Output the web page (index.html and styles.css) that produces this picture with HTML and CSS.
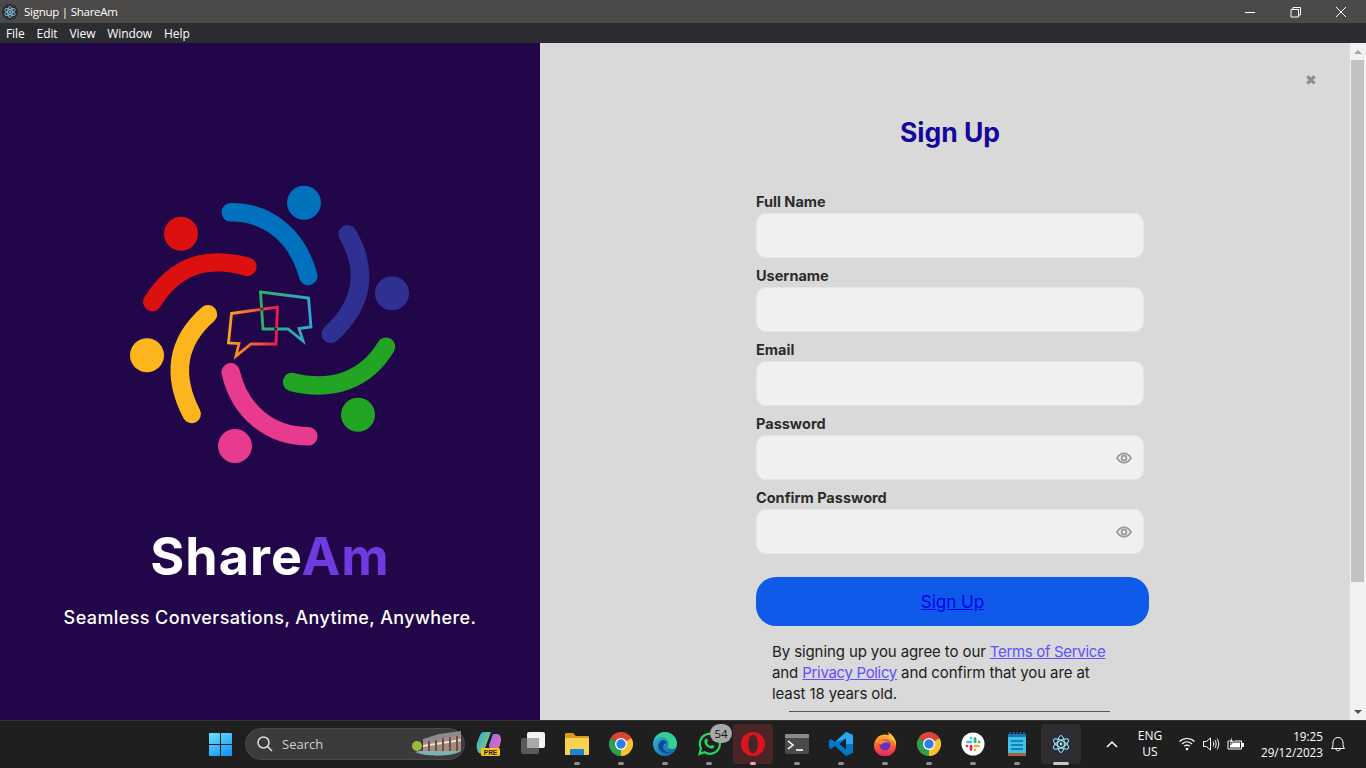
FILE: index.html
```html
<!DOCTYPE html>
<html>
<head>
<title>Signup | ShareAm</title>
<meta charset="UTF-8"/>
<link rel="stylesheet" href="styles.css">
</head>
<body>
	<svg class="defs" width="0" height="0">
		<defs>
			<symbol id="icoChrome" viewBox="0 0 24 24">
				<path fill="#db4437" d="M12 12L1.6 6A12 12 0 0 1 22.4 6Z"/>
				<path fill="#fbc02d" d="M12 12L22.4 6A12 12 0 0 1 12 24Z"/>
				<path fill="#2e9e4f" d="M12 12L12 24A12 12 0 0 1 1.6 6Z"/>
				<circle cx="12" cy="12" r="6" fill="#fff"/>
				<circle cx="12" cy="12" r="4.7" fill="#2f7de9"/>
			</symbol>
			<symbol id="icoElectron" viewBox="0 0 24 24">
				<circle cx="12" cy="12" r="12" fill="#2b2e3a"/>
				<g fill="none" stroke="#9feaf9" stroke-width="1">
					<ellipse cx="12" cy="12" rx="8.5" ry="3.4" transform="rotate(30 12 12)"/>
					<ellipse cx="12" cy="12" rx="8.5" ry="3.4" transform="rotate(90 12 12)"/>
					<ellipse cx="12" cy="12" rx="8.5" ry="3.4" transform="rotate(150 12 12)"/>
				</g>
				<circle cx="12" cy="12" r="1.4" fill="#9feaf9"/>
			</symbol>
			<symbol id="icoEye" viewBox="0 0 16 16">
				<path fill="none" stroke="#989898" stroke-width="1.7" d="M1 8C3 4.8 5.3 3.4 8 3.4S13 4.8 15 8C13 11.2 10.7 12.6 8 12.6S3 11.2 1 8Z"/>
				<circle cx="8" cy="8" r="2.4" fill="none" stroke="#989898" stroke-width="1.7"/>
			</symbol>
			<linearGradient id="gradOrange" x1="0" y1="0" x2="1" y2="0">
				<stop offset="0" stop-color="#f9a51f"/>
				<stop offset="1" stop-color="#ed1c4a"/>
			</linearGradient>
			<linearGradient id="gradTeal" x1="0" y1="0" x2="1" y2="0">
				<stop offset="0" stop-color="#2fb05f"/>
				<stop offset="1" stop-color="#2ea9d6"/>
			</linearGradient>
			<linearGradient id="gradWin" x1="0" y1="0" x2="0.6" y2="1">
				<stop offset="0" stop-color="#6fe0fb"/>
				<stop offset="1" stop-color="#1c9bf5"/>
			</linearGradient>
			<linearGradient id="gradPilotA" x1="0" y1="0" x2="1" y2="1">
				<stop offset="0" stop-color="#2aa7ee"/>
				<stop offset="1" stop-color="#9ad14a"/>
			</linearGradient>
			<linearGradient id="gradPilotB" x1="0" y1="0" x2="1" y2="1">
				<stop offset="0" stop-color="#9a6cf0"/>
				<stop offset="1" stop-color="#f06ab0"/>
			</linearGradient>
			<linearGradient id="gradEdge" x1="0" y1="0" x2="1" y2="1">
				<stop offset="0" stop-color="#35c1d8"/>
				<stop offset="1" stop-color="#0c59a4"/>
			</linearGradient>
			<linearGradient id="gradFox" x1="0" y1="0" x2="0" y2="1">
				<stop offset="0" stop-color="#ffb52e"/>
				<stop offset="0.55" stop-color="#ff5a2c"/>
				<stop offset="1" stop-color="#e3206b"/>
			</linearGradient>
		</defs>
	</svg>

	<div class="titlebar">
		<svg class="titlebar-icon" width="16" height="16"><use href="#icoElectron"/></svg>
		<span class="titlebar-text">Signup | ShareAm</span>
		<div class="winbtns">
			<div class="winbtn">
				<svg width="12" height="12" viewBox="0 0 12 12"><path stroke="#fff" d="M1 6.5H11"/></svg>
			</div>
			<div class="winbtn">
				<svg width="12" height="12" viewBox="0 0 12 12"><path fill="none" stroke="#fff" d="M1 3.5H8.5V11H1ZM3 3.5V1.5H10.5V9H8.5"/></svg>
			</div>
			<div class="winbtn">
				<svg width="12" height="12" viewBox="0 0 12 12"><path stroke="#fff" d="M1 1L11 11M11 1L1 11"/></svg>
			</div>
		</div>
	</div>

	<div class="menubar">
		<span>File</span>
		<span>Edit</span>
		<span>View</span>
		<span>Window</span>
		<span>Help</span>
	</div>

	<div class="app">
		<div class="brand">
			<svg class="logo" width="300" height="290" viewBox="0 0 300 290">
				<g fill="none" stroke-width="18.5" stroke-linecap="round">
					<path stroke="#0071bc" d="M110.7 32.3C150 32 178 58 188.3 96"/>
					<path stroke="#2e3192" d="M227.7 54.3C248 90 244 124 210.7 154"/>
					<path stroke="#22a522" d="M266 166.7C246 200 212 212 172 202"/>
					<path stroke="#e83a8f" d="M110.7 192.3C120 232 150 256 188.3 256.3"/>
					<path stroke="#fdb51e" d="M88 134.3C56 162 52 196 71.7 234"/>
					<path stroke="#dd1010" d="M32.3 122C56 84 88 76 127.3 86.7"/>
				</g>
				<circle cx="184" cy="22.7" r="17" fill="#0071bc"/>
				<circle cx="272" cy="113.3" r="17" fill="#2e3192"/>
				<circle cx="238" cy="234.7" r="17" fill="#22a522"/>
				<circle cx="115" cy="266" r="17" fill="#e83a8f"/>
				<circle cx="27" cy="175.3" r="17" fill="#fdb51e"/>
				<circle cx="61" cy="53.7" r="17" fill="#dd1010"/>
				<path fill="none" stroke="url(#gradOrange)" stroke-width="2.8" d="M111.5 133.5L157.5 127L156 164H131L116 176L119 163.5L108.5 163Z"/>
				<path fill="none" stroke="url(#gradTeal)" stroke-width="2.8" d="M140.5 112L188.5 118L191 147L179 148.5L183 161L168 149H143Z"/>
				<rect x="140.4" y="127.7" width="2.8" height="2.8" fill="#4a2f22"/>
				<rect x="154.3" y="147.6" width="2.8" height="2.8" fill="#3a1a22"/>
			</svg>
			<h1 class="brand-name">Share<span class="brand-am">Am</span></h1>
			<p class="brand-tag">Seamless Conversations, Anytime, Anywhere.</p>
		</div>

		<div class="content">
			<div class="close">&#10006;</div>
			<form class="signup">
				<h2 class="signup-title">Sign Up</h2>
				<div class="field">
					<label>Full Name</label>
					<div class="inputbox"></div>
				</div>
				<div class="field">
					<label>Username</label>
					<div class="inputbox"></div>
				</div>
				<div class="field">
					<label>Email</label>
					<div class="inputbox"></div>
				</div>
				<div class="field">
					<label>Password</label>
					<div class="inputbox"><svg width="16" height="16"><use href="#icoEye"/></svg></div>
				</div>
				<div class="field">
					<label>Confirm Password</label>
					<div class="inputbox"><svg width="16" height="16"><use href="#icoEye"/></svg></div>
				</div>
				<div class="submit"><a href="#">Sign Up</a></div>
				<p class="terms">By signing up you agree to our <a href="#">Terms of Service</a><br>and <a href="#">Privacy Policy</a> and confirm that you are at<br>least 18 years old.</p>
				<div class="rule"></div>
			</form>
		</div>

		<div class="scrollbar">
			<div class="scroll-up"></div>
			<div class="scroll-track"><div class="scroll-thumb"></div></div>
			<div class="scroll-down"></div>
		</div>
	</div>

	<div class="taskbar">
		<div class="task-start">
			<svg width="23" height="23" viewBox="0 0 23 23">
				<path fill="url(#gradWin)" d="M0 1a1 1 0 0 1 1-1H11V11H0ZM12 0H22a1 1 0 0 1 1 1V11H12ZM0 12H11V23H1a1 1 0 0 1-1-1ZM12 12H23V22a1 1 0 0 1-1 1H12Z"/>
			</svg>
		</div>
		<div class="task-search">
			<svg width="18" height="18" viewBox="0 0 18 18">
				<circle cx="7.5" cy="7.5" r="5.5" fill="none" stroke="#ddd" stroke-width="1.5"/>
				<path stroke="#ddd" stroke-width="1.6" d="M11.5 11.5L16 16"/>
			</svg>
			<span>Search</span>
			<svg class="search-art" width="52" height="26" viewBox="0 0 52 26">
				<path fill="#7fb0b5" d="M4 21C16 18 38 20 50 20C42 26 14 26 4 21Z"/>
				<circle cx="6" cy="15" r="5" fill="#9bbb3c"/>
				<path fill="#b08878" d="M12 10L50 3V20L12 20Z"/>
				<path fill="#8a8a8e" d="M12 8L28 3L50 0V4L12 11Z"/>
				<path fill="#e4e0dc" d="M12 14L50 8V10L12 16Z"/>
				<path fill="#5c5452" d="M17 10h2v10h-2ZM24 9h2v11h-2ZM31 7h2v13h-2ZM38 6h2v14h-2ZM45 5h2v15h-2Z"/>
			</svg>
		</div>
		<div class="task-item">
			<svg width="26" height="26" viewBox="0 0 26 26">
				<path fill="url(#gradPilotA)" d="M8 1H15L8 20C7 23 5 23 3 22C1 20 0 16 1 12L4 4C5 2 6 1 8 1Z"/>
				<path fill="url(#gradPilotB)" d="M14 20H20C22 19 23 17 24 14L25 9C25 6 24 3 21 3H17L13 14Z"/>
				<rect x="5" y="17" width="19" height="8" rx="1.5" fill="#f5c518"/>
				<text class="pre-text" x="14.5" y="23.5" text-anchor="middle">PRE</text>
			</svg>
		</div>
		<div class="task-item">
			<svg width="24" height="24" viewBox="0 0 24 24">
				<rect x="0" y="6" width="18" height="16" rx="2" fill="#5a5a5a"/>
				<rect x="6" y="0" width="18" height="16" rx="2" fill="#f2f2f2"/>
				<rect x="6" y="6" width="12" height="10" fill="#a9a9a9"/>
			</svg>
		</div>
		<div class="task-item is-open">
			<svg width="24" height="24" viewBox="0 0 24 24">
				<path fill="#d89a1c" d="M0 2a1 1 0 0 1 1-1H8L11 4H23a1 1 0 0 1 1 1V8H0Z"/>
				<path fill="#fbd24e" d="M0 6H24V22a1 1 0 0 1-1 1H1a1 1 0 0 1-1-1Z"/>
				<path fill="#1c84d6" d="M5 18a1 1 0 0 1 1-1H18a1 1 0 0 1 1 1V23H5Z"/>
			</svg>
		</div>
		<div class="task-item is-open">
			<svg width="24" height="24"><use href="#icoChrome"/></svg>
		</div>
		<div class="task-item is-open">
			<svg width="24" height="24" viewBox="0 0 24 24">
				<circle cx="12" cy="12" r="12" fill="url(#gradEdge)"/>
				<path fill="#35d08f" d="M12 0C18 0 24 5 24 12C24 15 22 17 19 17C16 17 14 16 15 14C17 11 14 5 8 5C5 5 2 7 1 9C2 4 7 0 12 0Z"/>
				<path fill="#0a4e8f" d="M10 8C6 9 4 13 6 17C8 21 13 22 17 21C13 20 10 18 10 15C10 12 12 11 14 11C13 9 12 8 10 8Z"/>
			</svg>
		</div>
		<div class="task-item is-open">
			<svg width="24" height="24" viewBox="0 0 24 24">
				<path fill="none" stroke="#25d366" stroke-width="2.2" d="M2.5 22L4 16.5A10 10 0 1 1 7.5 20.3Z"/>
				<path fill="#25d366" d="M8.5 7C10 6 10.5 7 11 9L10 10.5C10.5 12 12 13.5 13.5 14L15 13C17 13.5 18 14 17 15.5C15.5 17.5 12 16.5 9.5 14C7.5 12 6.5 9 8.5 7Z"/>
			</svg>
			<span class="badge">54</span>
		</div>
		<div class="task-item is-active">
			<svg width="24" height="24" viewBox="0 0 24 24">
				<ellipse cx="12" cy="12" rx="12" ry="12" fill="#e0141e"/>
				<ellipse cx="12" cy="12" rx="5" ry="9.5" fill="#4a2528"/>
			</svg>
		</div>
		<div class="task-item is-open">
			<svg width="24" height="20" viewBox="0 0 24 20">
				<rect width="24" height="20" rx="2" fill="#4a4a4a"/>
				<rect width="24" height="4" rx="1" fill="#8c8c8c"/>
				<path fill="none" stroke="#fff" stroke-width="1.6" d="M3 7L8 11L3 15"/>
				<path stroke="#fff" stroke-width="1.6" d="M11 16H18"/>
			</svg>
		</div>
		<div class="task-item is-open">
			<svg width="24" height="24" viewBox="0 0 24 24">
				<path fill="#0078c8" d="M17 0L24 3V21L17 24L6 14L2 17L0 15.5V8.5L2 7L6 10ZM17 6.5L10.5 12L17 17.5Z"/>
				<path fill="#29a6ef" d="M17 0L24 3V12H17V6.5L6 10L2 7L6 10Z"/>
			</svg>
		</div>
		<div class="task-item is-open">
			<svg width="24" height="24" viewBox="0 0 24 24">
				<circle cx="12" cy="13.5" r="11" fill="url(#gradFox)"/>
				<path fill="#ffc83a" d="M15 0C20 3 24 8 23 14C22 10 20 7 15 6C16 4 16 2 15 0Z"/>
				<circle cx="12" cy="13" r="5.5" fill="#6b32b8"/>
				<path fill="#ff8a2c" d="M5 10C8 8 14 7 17 11C14 10 11 10 9 12C7 13 6 12 5 10Z"/>
			</svg>
		</div>
		<div class="task-item is-open">
			<svg width="24" height="24"><use href="#icoChrome"/></svg>
		</div>
		<div class="task-item is-open">
			<svg width="24" height="24" viewBox="0 0 24 24">
				<circle cx="12" cy="12" r="11.5" fill="#fff"/>
				<g stroke-width="2.7" stroke-linecap="round">
					<path stroke="#36c5f0" d="M6.5 10H10M10 6V6.1"/>
					<path stroke="#2eb67d" d="M14 6.5V10M18 10H17.9"/>
					<path stroke="#ecb22e" d="M17.5 14H14M14 18V17.9"/>
					<path stroke="#e01e5a" d="M10 17.5V14M6 14H6.1"/>
				</g>
			</svg>
		</div>
		<div class="task-item is-open">
			<svg width="18" height="24" viewBox="0 0 18 24">
				<rect x="0" y="2" width="18" height="20" fill="#43bfe8"/>
				<rect x="0" y="21" width="18" height="3" fill="#a8623a"/>
				<rect x="0" y="2" width="18" height="3" fill="#1679b5"/>
				<path stroke="#1382b8" stroke-width="2" d="M3 9H15M3 13H15M3 17H15"/>
				<path stroke="#1679b5" stroke-width="1.2" d="M2 0V4M5.5 0V4M9 0V4M12.5 0V4M16 0V4"/>
			</svg>
		</div>
		<div class="task-item is-current">
			<svg width="24" height="24"><use href="#icoElectron"/></svg>
		</div>

		<div class="tray">
			<div class="tray-chevron">
				<svg width="12" height="8" viewBox="0 0 12 8"><path fill="none" stroke="#fff" stroke-width="1.5" d="M1 7L6 2L11 7"/></svg>
			</div>
			<div class="tray-lang">ENG<br>US</div>
			<div class="tray-ico">
				<svg width="16" height="14" viewBox="0 0 16 14">
					<g fill="none" stroke="#fff" stroke-width="1.2">
						<path d="M0.5 4.5C4.5 0.5 11.5 0.5 15.5 4.5"/>
						<path d="M3 7C6 4.2 10 4.2 13 7"/>
						<path d="M5.3 9.3C6.8 8 9.2 8 10.7 9.3"/>
					</g>
					<circle cx="8" cy="12" r="1.3" fill="#fff"/>
				</svg>
			</div>
			<div class="tray-ico">
				<svg width="17" height="14" viewBox="0 0 17 14">
					<g fill="none" stroke="#fff">
						<path d="M0.5 4.5H3.5L7.5 1V13L3.5 9.5H0.5Z"/>
						<path d="M10 4.5C11 6 11 8 10 9.5"/>
						<path d="M12 3C13.5 5 13.5 9 12 11"/>
						<path d="M14 1.5C16.3 4.5 16.3 9.5 14 12.5"/>
					</g>
				</svg>
			</div>
			<div class="tray-ico">
				<svg width="17" height="14" viewBox="0 0 17 14">
					<path fill="none" stroke="#fff" d="M1 4H14.5V12H1Z"/>
					<path fill="#fff" d="M15 6H17V10H15ZM3 5.5H13V10.5H3Z"/>
					<path fill="#fff" stroke="#1f1f1f" stroke-width="0.6" d="M5 0L2 5H4.5L3.5 8L7.5 3.5H5Z"/>
				</svg>
			</div>
			<div class="tray-clock">19:25<br>29/12/2023</div>
			<div class="tray-ico tray-bell">
				<svg width="16" height="16" viewBox="0 0 16 16">
					<path fill="none" stroke="#fff" d="M1.5 12.5C3 11 3 9 3 7C3 3.5 5 1.5 8 1.5S13 3.5 13 7C13 9 13 11 14.5 12.5Z"/>
					<path fill="none" stroke="#fff" d="M6 13C6 15.3 10 15.3 10 13"/>
				</svg>
			</div>
		</div>
	</div>
</body>
</html>
```

FILE: styles.css
```css
html, body
{
	margin: 0;
	padding: 0;
	height: 100%;
	overflow: hidden;
}

body
{
	display: flex;
	flex-direction: column;
	font-family: Inter, "Liberation Sans", sans-serif;
}

.defs
{
	display: block;
	height: 0;
}

/* window chrome */

.titlebar
{
	height: 23px;
	flex: none;
	display: flex;
	align-items: center;
	background-color: #4c4a48;
	color: #fff;
	font-family: "Open Sans", sans-serif;
	font-size: 11.5px;
	letter-spacing: -0.25px;
}

.titlebar-icon
{
	margin: 0 6px 0 2px;
}

.winbtns
{
	margin-left: auto;
	padding-right: 2px;
	display: flex;
}

.winbtn
{
	width: 45.5px;
	display: flex;
	justify-content: center;
}

.menubar
{
	height: 20px;
	flex: none;
	display: flex;
	align-items: center;
	gap: 12px;
	padding-left: 6px;
	background-color: #2b2d30;
	color: #fff;
	font-family: "Open Sans", sans-serif;
	font-size: 12px;
	letter-spacing: -0.1px;
}

.app
{
	flex: 1;
	min-height: 0;
	display: flex;
}

/* left side */

.brand
{
	width: 540px;
	flex: none;
	box-sizing: border-box;
	padding-top: 137px;
	display: flex;
	flex-direction: column;
	align-items: center;
	background-color: #21074a;
}

.logo
{
	display: block;
	flex: none;
}

.brand-name
{
	margin: 57px 0 0 0;
	font-size: 52px;
	line-height: 60px;
	font-weight: 700;
	letter-spacing: 1.1px;
	color: #fff;
}

.brand-am
{
	color: #6f3be0;
}

.brand-tag
{
	margin: 18px 0 0 0;
	font-size: 18px;
	line-height: 26px;
	font-weight: 500;
	letter-spacing: 0.4px;
	color: #fff;
}

/* form side */

.content
{
	flex: 1;
	position: relative;
	background-color: #d9d9d9;
	padding-left: 216px;
}

.close
{
	position: absolute;
	top: 29px;
	right: 33px;
	font-size: 14px;
	line-height: 16px;
	color: #8c8c8c;
}

.signup
{
	width: 393px;
	padding-top: 69px;
}

.signup-title
{
	width: 388px;
	margin: 0 0 40px 0;
	text-align: center;
	font-size: 26.5px;
	line-height: 40px;
	font-weight: 700;
	color: #14089a;
}

.field
{
	margin-bottom: 8px;
}

.field label
{
	display: block;
	height: 20px;
	margin-bottom: 1px;
	font-size: 14.5px;
	line-height: 20px;
	font-weight: 700;
	color: #2b2b2b;
}

.inputbox
{
	width: 388px;
	height: 45px;
	box-sizing: border-box;
	display: flex;
	align-items: center;
	justify-content: flex-end;
	padding-right: 11px;
	background-color: #f0f0f0;
	border: 1px solid #e6e6e6;
	border-radius: 10px;
}

.submit
{
	height: 49px;
	margin-top: 23px;
	display: flex;
	align-items: center;
	justify-content: center;
	background-color: #105ae9;
	border-radius: 20px;
	font-size: 17px;
}

.submit a
{
	color: #0000ee;
}

.terms
{
	margin: 15px 0 0 16px;
	white-space: nowrap;
	font-size: 15px;
	line-height: 21px;
	letter-spacing: -0.1px;
	color: #1c1c1c;
}

.terms a
{
	letter-spacing: -0.33px;
	color: #6050ff;
}

.rule
{
	width: 321px;
	height: 1px;
	margin: 7px 0 0 33px;
	background-color: #555;
}

/* page scrollbar */

.scrollbar
{
	width: 16px;
	flex: none;
	display: flex;
	flex-direction: column;
	background-color: #f1f1f1;
}

.scroll-up, .scroll-down
{
	height: 17px;
	flex: none;
	display: flex;
	align-items: center;
	justify-content: center;
}

.scroll-up::before, .scroll-down::before
{
	content: "";
	border-left: 4px solid transparent;
	border-right: 4px solid transparent;
}

.scroll-up::before
{
	border-bottom: 4px solid #a3a3a3;
}

.scroll-down::before
{
	border-top: 4px solid #505050;
}

.scroll-track
{
	flex: 1;
	padding: 0 2px 0 1px;
}

.scroll-thumb
{
	height: 522px;
	background-color: #c1c1c1;
}

/* windows taskbar */

.taskbar
{
	height: 48px;
	flex: none;
	display: flex;
	align-items: center;
	padding-left: 198px;
	background-color: #1f1f1f;
	box-shadow: inset 0 1px 0 #333;
	color: #fff;
	font-family: "Open Sans", sans-serif;
}

.task-start, .task-item
{
	width: 44px;
	height: 40px;
	flex: none;
	position: relative;
	display: flex;
	align-items: center;
	justify-content: center;
}

.task-item.is-open::after, .task-item.is-active::after, .task-item.is-current::after
{
	content: "";
	position: absolute;
	left: 19px;
	bottom: -1px;
	width: 6px;
	height: 3px;
	border-radius: 2px;
	background-color: #8f8f8f;
}

.task-item.is-active
{
	width: 40px;
	margin: 0 2px;
	background-color: #4a2528;
	border-radius: 4px;
}

.task-item.is-active::after
{
	left: 17px;
	background-color: #f0a8b0;
}

.task-item.is-current
{
	width: 40px;
	margin-left: 2px;
	background-color: #2e2e2e;
	border-radius: 4px;
}

.task-item.is-current::after
{
	left: 12px;
	width: 16px;
	background-color: #c8c8c8;
}

.task-search
{
	width: 220px;
	height: 32px;
	flex: none;
	box-sizing: border-box;
	margin: 0 2px 0 3px;
	padding-left: 10px;
	position: relative;
	display: flex;
	align-items: center;
	gap: 8px;
	background-color: #3b3b3b;
	border: 1px solid #4a4a4a;
	border-radius: 16px;
	font-size: 13px;
	color: #d0d0d0;
}

.search-art
{
	position: absolute;
	right: 1px;
	top: 2px;
}

.pre-text
{
	font-family: "Liberation Sans", sans-serif;
	font-size: 6.5px;
	font-weight: 700;
	fill: #222;
}

.badge
{
	position: absolute;
	left: 23px;
	top: 0;
	width: 22px;
	height: 19px;
	border-radius: 10px;
	background-color: #a8a8a8;
	color: #111;
	font-size: 11.5px;
	line-height: 19px;
	text-align: center;
}

.tray
{
	margin-left: auto;
	padding-right: 13px;
	display: flex;
	align-items: center;
	font-size: 12px;
	line-height: 16px;
}

.tray-chevron
{
	width: 30px;
	display: flex;
	justify-content: center;
}

.tray-lang
{
	width: 46px;
	margin-right: 2px;
	text-align: center;
}

.tray-ico
{
	width: 24px;
	display: flex;
	justify-content: center;
}

.tray-clock
{
	width: 76px;
	text-align: right;
	font-size: 11.7px;
}

.tray-bell
{
	width: 30px;
}
```
